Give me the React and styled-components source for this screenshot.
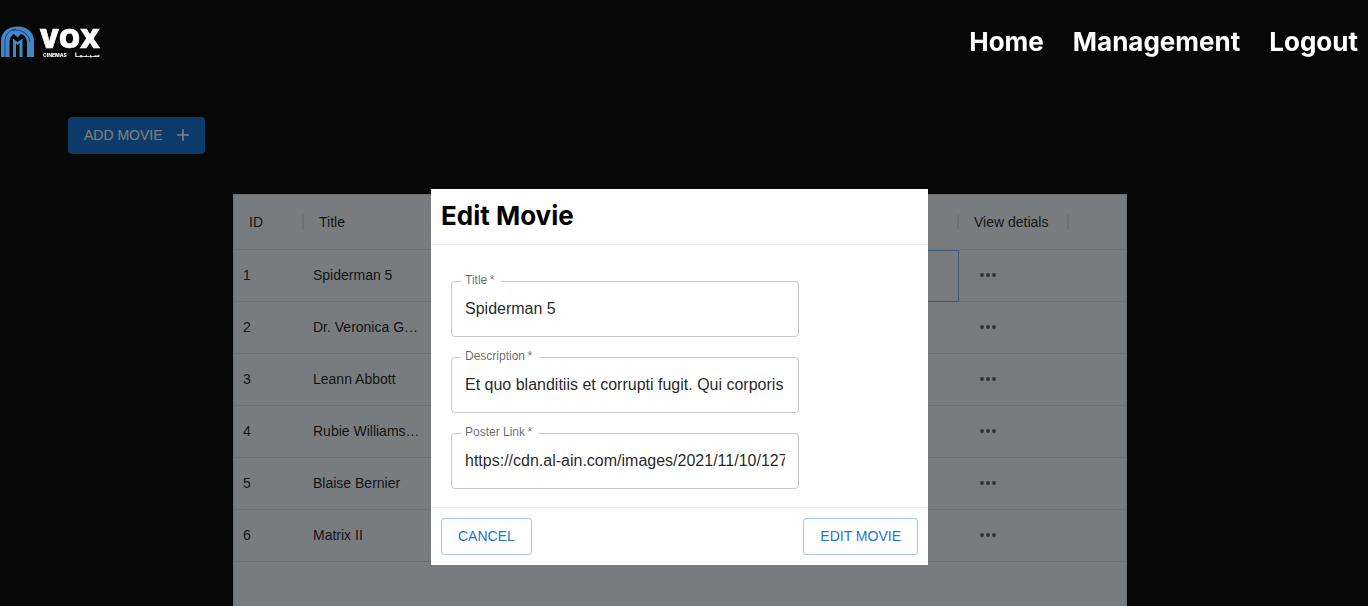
import React from 'react';
import styled, { createGlobalStyle } from 'styled-components';

const GlobalStyle = createGlobalStyle`
  *, *::before, *::after { box-sizing: border-box; }
  body {
    margin: 0;
    background: #070707;
    font-family: "Liberation Sans", Arial, sans-serif;
    font-size: 14px;
  }
`;

const Page = styled.div`
  min-height: 100vh;
  display: flex;
  flex-direction: column;
  background: #0e0e0e;
`;

const Header = styled.header`
  position: relative;
  z-index: 2;
  display: flex;
  align-items: center;
  justify-content: space-between;
  height: 83px;
  padding-right: 10px;
`;

const LogoLink = styled.a`
  display: block;
  height: 36px;
`;

const Nav = styled.nav`
  display: flex;
  gap: 29px;
`;

const NavLink = styled.a`
  color: #fff;
  font: 700 26px/32px Inter, sans-serif;
  text-decoration: none;
`;

const Main = styled.main`
  flex: 1;
  display: flex;
  flex-direction: column;
  padding: 34px 8px 0 0;
`;

const AddButton = styled.button`
  align-self: flex-start;
  display: flex;
  align-items: center;
  gap: 10px;
  height: 37px;
  margin-left: 68px;
  padding: 0 12px 1px 16px;
  border: 0;
  border-radius: 4px;
  background: #1976d2;
  color: #fff;
  font: inherit;
  text-transform: uppercase;
`;

const GridPanel = styled.section`
  flex: 1;
  width: 894px;
  max-width: 100%;
  margin: 40px auto 0;
  border: 1px solid #e0e0e0;
  border-bottom: 0;
  background: #f0f8ff;
`;

const Table = styled.table`
  width: 100%;
  table-layout: fixed;
  border-collapse: separate;
  border-spacing: 0;
  color: rgba(0, 0, 0, 0.87);
`;

const Col = styled.col`
  width: ${(p) => (p.$width ? `${p.$width}px` : 'auto')};
`;

const HeadCell = styled.th`
  height: 55px;
  padding: 0;
  border-bottom: 1px solid #e0e0e0;
  font-weight: 400;
  text-align: left;
`;

const HeadLabel = styled.div`
  height: 14px;
  padding-left: 15px;
  line-height: 14px;
  border-right: ${(p) => (p.$divided ? '2px solid #e0e0e0' : '0')};
`;

const Cell = styled.td`
  height: 52px;
  padding: 0 9px 2px;
  overflow: hidden;
  border-bottom: 1px solid #e0e0e0;
  outline: ${(p) => (p.$focused ? '1px solid rgba(25, 118, 210, 0.5)' : 'none')};
  outline-offset: -1px;
  text-overflow: ellipsis;
  white-space: nowrap;
`;

const IconButton = styled.button`
  display: flex;
  padding: 8px;
  border: 0;
  background: none;
  color: rgba(0, 0, 0, 0.6);
`;

const Overlay = styled.div`
  position: fixed;
  inset: 0;
  z-index: 1;
  display: flex;
  align-items: flex-start;
  justify-content: center;
  padding: 189px 9px 0 0;
  background: rgba(0, 0, 0, 0.5);
`;

const Dialog = styled.form`
  width: 497px;
  max-width: 100%;
  background: #fff;
`;

const DialogTitle = styled.h2`
  margin: 0;
  padding: 11px 10px 12px;
  border-bottom: 1px solid #eee;
  color: #000;
  font: 700 26px/32px Inter, sans-serif;
`;

const DialogBody = styled.div`
  display: flex;
  flex-direction: column;
  gap: 20px;
  padding: 36px 20px 18px;
`;

const Field = styled.div`
  position: relative;
  width: 348px;
  max-width: 100%;
  height: 56px;
  padding: 0 13px;
  border: 1px solid #c8c8c8;
  border-radius: 4px;
`;

const FieldLabel = styled.label`
  position: absolute;
  top: -10px;
  left: 9px;
  padding: 0 7px 0 4px;
  background: #fff;
  color: rgba(0, 0, 0, 0.6);
  font-size: 12px;
  line-height: 16px;
`;

const FieldInput = styled.input`
  width: 100%;
  height: 100%;
  padding: 0 0 1px;
  border: 0;
  outline: 0;
  background: transparent;
  color: rgba(0, 0, 0, 0.87);
  font: inherit;
  font-size: 16px;
`;

const DialogActions = styled.div`
  display: flex;
  justify-content: space-between;
  padding: 10px;
  border-top: 1px solid #eee;
`;

const OutlinedButton = styled.button`
  height: 37px;
  padding: 0 16px 1px;
  border: 1px solid rgba(25, 118, 210, 0.4);
  border-radius: 4px;
  background: #fff;
  color: #1976d2;
  font: inherit;
  text-transform: uppercase;
`;

const Logo = () => (
  <svg width="108" height="36" viewBox="0 0 108 36" role="img" aria-label="VOX Cinemas">
    <path d="M1 33V17C1 8 8 2.500 17.500 2.500S34 8 34 17V33H27V19C27 14 24.500 11 21 10L17.500 13.500L14 10C11.500 11.500 9.500 14 9.500 19V33Z" fill="#4285c8" />
    <path d="M13 33V14.500L17.500 18L22.500 14.500V33H19.500V19.500L17.500 21L16 19.500V33Z" fill="#4285c8" />
    <path d="M5 33V18C5 10 9.500 6 16 5M12 6.500C20 4.500 29 9 30 18" fill="none" stroke="#163452" strokeWidth="0.8" />
    <text x="40" y="24" fill="#fff" stroke="#fff" strokeWidth="0.6" fontFamily="Open Sans" fontWeight="800" fontSize="27">VOX</text>
    <text x="43" y="33" fill="#fff" fontFamily="Inter" fontWeight="800" fontSize="5">CINEMAS</text>
    <text x="100" y="33" textAnchor="end" fill="#fff" fontFamily="DejaVu Sans" fontWeight="700" fontSize="6">سـيـنـمـا</text>
  </svg>
);

const PlusIcon = () => (
  <svg width="20" height="20" viewBox="0 0 24 24" fill="currentColor" aria-hidden="true">
    <path d="M19 13h-6v6h-2v-6H5v-2h6V5h2v6h6v2z" />
  </svg>
);

const MoreIcon = () => (
  <svg width="24" height="24" viewBox="0 0 24 24" fill="currentColor" aria-hidden="true">
    <circle cx="6" cy="12" r="2" />
    <circle cx="12" cy="12" r="2" />
    <circle cx="18" cy="12" r="2" />
  </svg>
);

const columns = [
  { key: 'id', label: 'ID', width: 70, divided: true },
  { key: 'title', label: 'Title', width: 130, divided: true },
  { key: 'details', label: '', divided: true },
  { key: 'view', label: 'View detials', width: 110, divided: true },
  { key: 'rest', label: '', width: 57 },
];

const movies = [
  { id: 1, title: 'Spiderman 5', focused: true },
  { id: 2, title: 'Dr. Veronica G…' },
  { id: 3, title: 'Leann Abbott' },
  { id: 4, title: 'Rubie Williams…' },
  { id: 5, title: 'Blaise Bernier' },
  { id: 6, title: 'Matrix II' },
];

const fields = [
  { id: 'title', label: 'Title', value: 'Spiderman 5' },
  { id: 'description', label: 'Description', value: 'Et quo blanditiis et corrupti fugit. Qui corporis' },
  { id: 'poster', label: 'Poster Link', value: 'https://cdn.al-ain.com/images/2021/11/10/127' },
];

export default function App() {
  return (
    <Page>
      <GlobalStyle />
      <Header>
        <LogoLink href="#"><Logo /></LogoLink>
        <Nav>
          <NavLink href="#home">Home</NavLink>
          <NavLink href="#management">Management</NavLink>
          <NavLink href="#logout">Logout</NavLink>
        </Nav>
      </Header>
      <Main>
        <AddButton type="button">Add movie<PlusIcon /></AddButton>
        <GridPanel>
          <Table>
            <colgroup>
              {columns.map((c) => <Col key={c.key} $width={c.width} />)}
            </colgroup>
            <thead>
              <tr>
                {columns.map((c) => (
                  <HeadCell key={c.key} scope="col">
                    <HeadLabel $divided={c.divided}>{c.label}</HeadLabel>
                  </HeadCell>
                ))}
              </tr>
            </thead>
            <tbody>
              {movies.map((m) => (
                <tr key={m.id}>
                  <Cell>{m.id}</Cell>
                  <Cell>{m.title}</Cell>
                  <Cell $focused={m.focused} />
                  <Cell>
                    <IconButton type="button" aria-label={`View ${m.title}`}><MoreIcon /></IconButton>
                  </Cell>
                  <Cell />
                </tr>
              ))}
            </tbody>
          </Table>
        </GridPanel>
      </Main>
      <Overlay>
        <Dialog role="dialog" aria-labelledby="dialog-title">
          <DialogTitle id="dialog-title">Edit Movie</DialogTitle>
          <DialogBody>
            {fields.map((f) => (
              <Field key={f.id}>
                <FieldLabel htmlFor={f.id}>{f.label}{'\u2009*'}</FieldLabel>
                <FieldInput id={f.id} type="text" defaultValue={f.value} />
              </Field>
            ))}
          </DialogBody>
          <DialogActions>
            <OutlinedButton type="button">Cancel</OutlinedButton>
            <OutlinedButton type="button">Edit movie</OutlinedButton>
          </DialogActions>
        </Dialog>
      </Overlay>
    </Page>
  );
}
